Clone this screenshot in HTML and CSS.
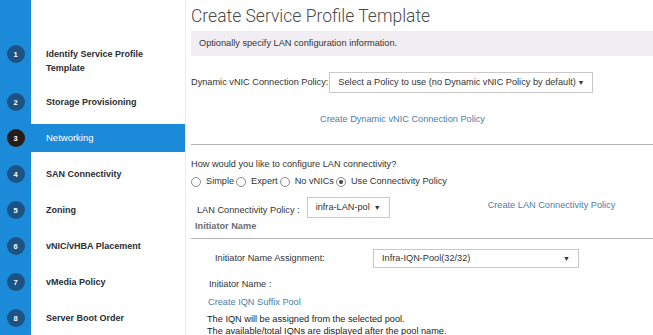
FILE: index.html
```html
<!DOCTYPE html>
<html lang="en">
<head>
  <meta charset="UTF-8">
  <title>Create Service Profile Template</title>
  <link rel="stylesheet" href="styles.css">
</head>
<body>
  <div class="wizard">
    <nav class="steps">
      <div class="step step-first">
        <div class="rail"><span class="num">1</span></div>
        <div class="label">Identify Service Profile<br>Template</div>
      </div>
      <div class="step">
        <div class="rail"><span class="num">2</span></div>
        <div class="label">Storage Provisioning</div>
      </div>
      <div class="step active">
        <div class="rail"><span class="num">3</span></div>
        <div class="label">Networking</div>
      </div>
      <div class="step">
        <div class="rail"><span class="num">4</span></div>
        <div class="label">SAN Connectivity</div>
      </div>
      <div class="step">
        <div class="rail"><span class="num">5</span></div>
        <div class="label">Zoning</div>
      </div>
      <div class="step">
        <div class="rail"><span class="num">6</span></div>
        <div class="label">vNIC/vHBA Placement</div>
      </div>
      <div class="step">
        <div class="rail"><span class="num">7</span></div>
        <div class="label">vMedia Policy</div>
      </div>
      <div class="step">
        <div class="rail"><span class="num">8</span></div>
        <div class="label">Server Boot Order</div>
      </div>
    </nav>

    <main class="content">
      <h1>Create Service Profile Template</h1>
      <div class="info">Optionally specify LAN configuration information.</div>

      <div class="row dyn-row">
        <span>Dynamic vNIC Connection Policy:</span>
        <div class="select dyn-select">Select a Policy to use (no Dynamic vNIC Policy by default) <span class="caret">&#9660;</span></div>
      </div>
      <a class="link dyn-link">Create Dynamic vNIC Connection Policy</a>

      <div class="divider"></div>

      <p class="question">How would you like to configure LAN connectivity?</p>
      <div class="radios">
        <span class="radio"></span><span class="opt">Simple</span>
        <span class="radio"></span><span class="opt">Expert</span>
        <span class="radio"></span><span class="opt">No vNICs</span>
        <span class="radio checked"></span><span class="opt">Use Connectivity Policy</span>
      </div>

      <div class="row lan-row">
        <span class="lan-label">LAN Connectivity Policy :</span>
        <div class="select lan-select">infra-LAN-pol <span class="caret">&#9660;</span></div>
        <a class="link lan-link">Create LAN Connectivity Policy</a>
      </div>

      <div class="section-title">Initiator Name</div>
      <div class="divider divider-2"></div>

      <div class="row assign-row">
        <span class="assign-label">Initiator Name Assignment:</span>
        <div class="select assign-select">Infra-IQN-Pool(32/32) <span class="caret">&#9660;</span></div>
      </div>
      <p class="iname">Initiator Name :</p>
      <a class="link iqn-link">Create IQN Suffix Pool</a>
      <p class="note">The IQN will be assigned from the selected pool.<br>The available/total IQNs are displayed after the pool name.</p>
    </main>
  </div>
</body>
</html>
```

FILE: styles.css
```css
* {
  box-sizing: border-box;
}

body {
  margin: 0;
  font-family: 'Liberation Sans', Arial, sans-serif;
  background: #fff;
  overflow: hidden;
}

.wizard {
  display: flex;
  height: 335px;
}

/* left wizard steps */
.steps {
  width: 185px;
  flex: none;
  padding-top: 40px;
  background: linear-gradient(to right, #1b8bd9 31px, #fff 31px);
}

.step {
  display: flex;
  align-items: flex-start;
  margin-bottom: 8px;
}

.step-first {
  margin-bottom: 6px;
}

.rail {
  width: 31px;
  height: 28px;
  flex: none;
  display: flex;
  align-items: center;
  justify-content: center;
}

.num {
  width: 18px;
  height: 18px;
  border-radius: 50%;
  background: #1d5285;
  color: #fff;
  font-size: 7.5px;
  font-weight: 700;
  display: flex;
  align-items: center;
  justify-content: center;
}

.label {
  flex: 1;
  padding: 7px 0 7px 15px;
  font-size: 9px;
  font-weight: 700;
  line-height: 14px;
  color: #2a2d33;
}

.step.active .label {
  background: #1b8bd9;
  color: #fff;
  font-weight: 400;
  font-size: 9.5px;
}

.step.active .num {
  background: #261d1b;
}

/* main content */
.content {
  flex: 1;
  border-left: 1px solid #ececec;
  padding-left: 5px;
  font-size: 9.2px;
  line-height: 11px;
  color: #333;
}

h1 {
  margin: 4px 0 0;
  font-family: Roboto, sans-serif;
  font-weight: 300;
  font-size: 17.5px;
  line-height: 24px;
  color: #4a4a4a;
}

.info {
  margin-top: 3px;
  height: 25px;
  line-height: 25px;
  padding-left: 8px;
  background: #f1eef3;
}

.row {
  display: flex;
  align-items: center;
}

.select {
  display: flex;
  align-items: center;
  justify-content: space-between;
  border: 1px solid #c9c9c9;
  background: #fff;
  padding: 0 8px;
  white-space: nowrap;
}

.caret {
  font-size: 7px;
  color: #333;
}

.link {
  display: block;
  color: #4d7ea6;
}

.dyn-row {
  margin-top: 16px;
}

.dyn-select {
  width: 264px;
  height: 21px;
  margin-left: 1px;
}

.dyn-link {
  margin: 21px 0 0 129px;
}

.divider {
  margin-top: 19px;
  border-top: 1px solid #b5b5b5;
}

.question {
  margin: 14px 0 0;
}

.radios {
  display: flex;
  align-items: center;
  margin-top: 6px;
}

.radio {
  width: 10px;
  height: 10px;
  border: 1px solid #8a8a8a;
  border-radius: 50%;
  margin-right: 5px;
  display: flex;
  align-items: center;
  justify-content: center;
}

.opt {
  margin-right: 2px;
}

.radio.checked::after {
  content: "";
  width: 4px;
  height: 4px;
  border-radius: 50%;
  background: #444;
}

.lan-row {
  margin-top: 10px;
  align-items: flex-start;
}

.lan-label {
  margin: 8px 0 0 6px;
}

.lan-select {
  width: 83px;
  height: 21px;
  margin-left: 7px;
}

.lan-link {
  margin: 3px 0 0 98px;
}

.section-title {
  margin: 3px 0 0 4px;
  font-weight: 700;
  color: #6d6d6d;
}

.divider-2 {
  margin-top: 6px;
}

.assign-row {
  margin-top: 10px;
}

.assign-label {
  width: 182px;
  padding-left: 24px;
}

.assign-select {
  width: 206px;
  height: 19px;
}

.iname {
  margin: 11px 0 0 18px;
}

.iqn-link {
  margin: 7px 0 0 17px;
}

.note {
  margin: 5px 0 0 16px;
  line-height: 12px;
  color: #222;
}
```
